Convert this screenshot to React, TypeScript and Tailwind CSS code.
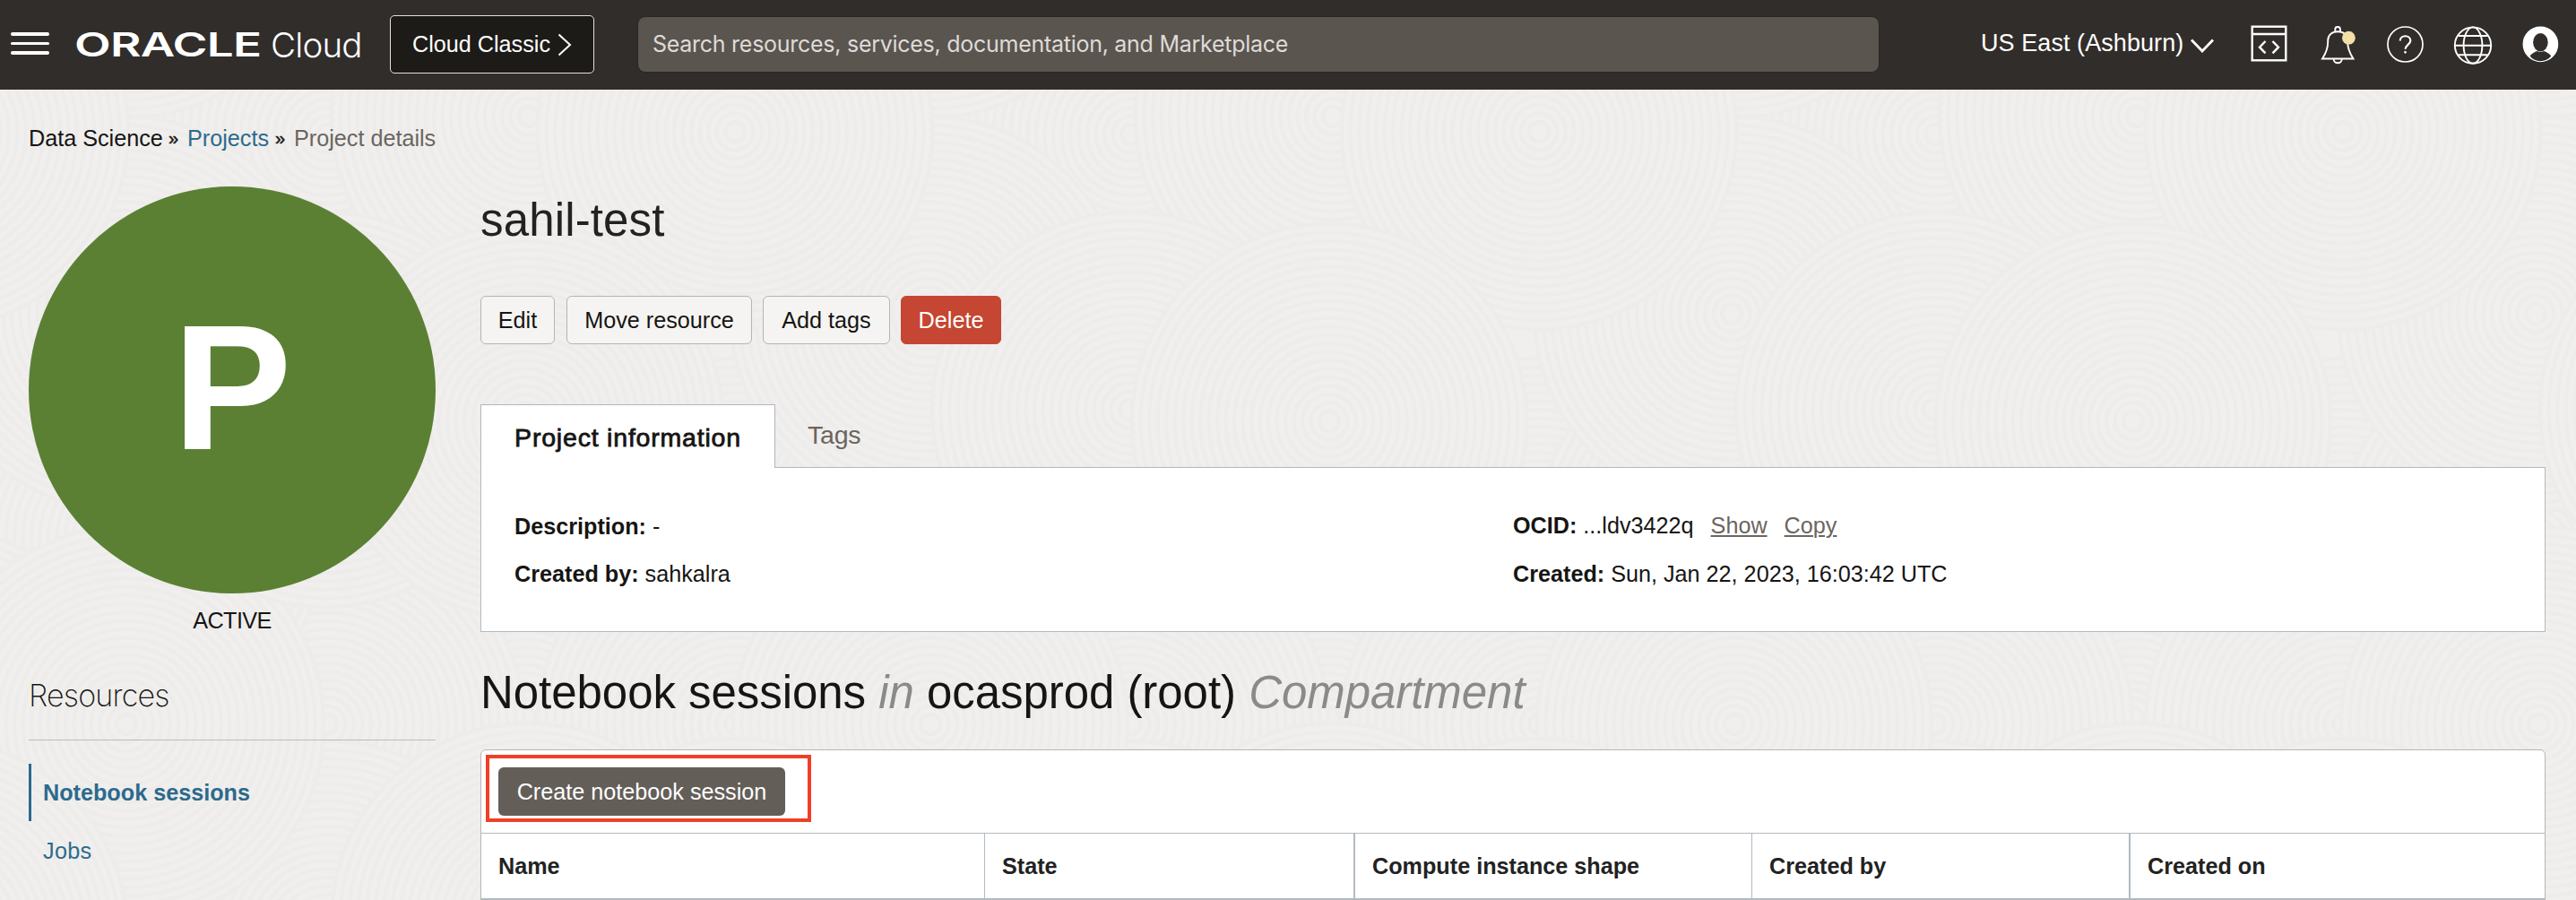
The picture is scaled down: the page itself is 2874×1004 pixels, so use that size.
import type { ReactNode } from "react";

const TILE = 897;
const RINGS = Array.from({ length: 23 }, (_, i) => 220 - i * 9.5);
const SWIRLS: [number, number][] = [
  [141, 100],
  [365, 640],
  [586, 800],
  [820, 620],
  [365, 808],
  [141, 600],
  [365, 150],
  [820, 808],
  [141, 808],
  [138, 350],
  [590, 130],
  [820, 147],
  [363, 457],
  [586, 470],
];

function Texture() {
  return (
    <svg className="absolute inset-0 h-full w-full" aria-hidden="true">
      <defs>
        <pattern id="swirls" width={TILE} height={TILE} patternUnits="userSpaceOnUse">
          <rect width={TILE} height={TILE} fill="#f0efed" />
          {SWIRLS.map(([cx, cy], i) =>
            [-TILE, 0, TILE].map((dx) =>
              [-TILE, 0, TILE].map((dy) => (
                <g key={`${i}${dx}${dy}`} fill="none" stroke="#edecea" strokeWidth="4">
                  {RINGS.map((r, n) => (
                    <circle key={r} cx={cx + dx} cy={cy + dy} r={r} fill={n === 0 ? "#f0efed" : "none"} />
                  ))}
                </g>
              )),
            ),
          )}
        </pattern>
      </defs>
      <rect width="100%" height="100%" fill="url(#swirls)" />
    </svg>
  );
}

function Header() {
  return (
    <header className="relative flex h-[100px] items-start bg-[#312d2a] text-white">
      <button className="mt-9 ml-3 flex w-[43px] flex-col gap-[7px]" aria-label="Menu">
        <span className="h-[3.5px] w-full rounded-full bg-white" />
        <span className="h-[3.5px] w-full rounded-full bg-white" />
        <span className="h-[3.5px] w-full rounded-full bg-white" />
      </button>
      <div className="mt-[25px] ml-[28px] flex h-[50px] items-center whitespace-nowrap">
        <span className="w-[219px]">
          <span className="inline-block origin-left scale-x-[1.45] font-['Inter'] text-[36.5px] leading-[50px] font-semibold tracking-[-0.5px]">
            ORACLE
          </span>
        </span>
        <span className="font-['Inter'] text-[38.5px] leading-[50px] font-light tracking-[-0.8px]">Cloud</span>
      </div>
      <button className="absolute top-[17px] left-[435px] flex h-[65px] w-[228px] items-center rounded-[5px] border border-[#e4e1dd] bg-[#1d1b17] pt-px pl-[24px] text-[25.2px]">
        Cloud Classic
        <svg className="ml-[8px]" width="16" height="26" viewBox="0 0 16 26" fill="none" stroke="white" strokeWidth="2">
          <path d="M1.5 1.5 14 13 1.5 24.5" />
        </svg>
      </button>
      <div className="absolute top-[19px] left-[712px] flex h-[61px] w-[1384px] items-center rounded-lg bg-[#5b5550] pt-px pl-4 font-['Inter'] text-[25px] tracking-[-0.27px] text-[#dedbd7] shadow-[0_0_0_1px_#2a2623]">
        Search resources, services, documentation, and Marketplace
      </div>
      <div className="absolute top-[30px] left-[2210px] flex h-9 items-center text-[27px] tracking-[0.07px] whitespace-nowrap">
        US East (Ashburn)
        <svg className="mt-[6px] ml-[8px]" width="26" height="16" viewBox="0 0 26 16" fill="none" stroke="white" strokeWidth="2.8">
          <path d="M1 1.5 13 14 25 1.5" />
        </svg>
      </div>
      <svg className="absolute top-0 left-[2490px]" width="384" height="100" viewBox="2490 0 384 100" fill="none" stroke="white">
        <g strokeWidth="2.4">
          <rect x="2512.7" y="29.7" width="37.6" height="37.6" />
          <path d="M2512 38h39M2527.5 46l-6.5 6.7 6.5 6.7M2535.5 46l6.5 6.7-6.5 6.7" />
        </g>
        <g strokeWidth="1.9">
          <path d="M2591 65.5h34.5c-4.5-7-6.3-12-6.3-18.5v-2c0-6-4.8-9.8-11-9.8s-11 3.800-11 9.800v2c0 6.500-1.700 11.500-6.200 18.500Z" />
          <path d="M2605.300 35.500v-3c0-3.300 5.600-3.300 5.600 0v3M2603.700 66c0 5.700 9 5.700 9 0" />
        </g>
        <circle cx="2620.400" cy="42.200" r="7.400" fill="#f3dfa7" stroke="none" />
        <g strokeWidth="1.7">
          <circle cx="2683.500" cy="49.500" r="19.500" />
          <path d="M2677.800 45.500c0-7 11.500-7 11.500 0 0 4-5.700 4.800-5.700 9.300" strokeWidth="2.2" />
          <circle cx="2683.500" cy="58.300" r="1" fill="white" stroke="white" strokeWidth="1" />
        </g>
        <g strokeWidth="1.900">
          <circle cx="2759" cy="50.600" r="20.200" />
          <ellipse cx="2759" cy="50.600" rx="10.400" ry="20.200" />
          <path d="M2738.800 50.800h40.400M2742.500 40h33M2742.500 61.300h33" />
        </g>
        <circle cx="2834.400" cy="49.300" r="19.200" fill="white" strokeWidth="1.300" />
        <ellipse cx="2834.400" cy="47.200" rx="8.300" ry="10.200" fill="#312d2a" stroke="none" />
        <path d="M2822.500 62.500c2.500-3 4.500-4 8-5.500 2.500 1.200 5.300 1.200 7.800 0 3.500 1.500 5.500 2.500 8 5.500-6 7.500-18 7.500-23.800 0Z" fill="#312d2a" stroke="none" />
      </svg>
    </header>
  );
}

function Action({ children, className }: { children: ReactNode; className: string }) {
  return (
    <button className={`h-[54px] rounded-md border pt-px text-center whitespace-nowrap ${className}`}>
      {children}
    </button>
  );
}

const LIGHT = "border-[#b8b4af] bg-[#f5f4f2]";

function Field({ label, children }: { label: string; children: ReactNode }) {
  return (
    <p className="leading-[30px]">
      <b>{label}</b> {children}
    </p>
  );
}

const COLUMNS = [
  { name: "Name", size: "w-[562px] border-r" },
  { name: "State", size: "w-[413px] border-r-2" },
  { name: "Compute instance shape", size: "w-[443px] border-r" },
  { name: "Created by", size: "w-[422px] border-r-2" },
  { name: "Created on", size: "flex-1" },
];

export default function App() {
  return (
    <div className="relative h-[1004px] w-[2874px] overflow-hidden font-['Liberation_Sans',Arial,sans-serif] text-[25.2px] text-[#161513]">
      <Texture />
      <Header />
      <nav className="relative mt-[39px] ml-[32px] flex leading-[30px] whitespace-nowrap">
        <span className="w-[156px]">Data Science</span>
        <span className="w-[21px] text-[20px] leading-[30px] [-webkit-text-stroke:0.5px]">»</span>
        <a className="w-[98px] text-[#2c6a8d]">Projects</a>
        <span className="w-[21px] text-[20px] leading-[30px] [-webkit-text-stroke:0.5px]">»</span>
        <span className="text-[#6b6560]">Project details</span>
      </nav>

      <div className="relative mt-[39px] ml-8 flex gap-[50px]">
        <aside className="w-[454px]">
          <div className="flex size-[454px] items-center justify-center rounded-full bg-[#5b8034] pb-[5px] text-[199px] leading-none font-bold text-white">
            P
          </div>
          <p className="mt-[15px] text-center leading-[30px] tracking-[-0.6px]">ACTIVE</p>
          <h2 className="mt-[49px] border-b border-[#b5bac4] pb-[29px] font-['Inter'] text-[34px] leading-10 font-extralight tracking-[-0.8px]">
            Resources
          </h2>
          <a className="mt-[26px] flex h-16 items-center border-l-[3px] border-[#2c6a8d] pt-[2px] pl-[13px] font-bold text-[#2c6a8d]">
            Notebook sessions
          </a>
          <a className="mt-px flex h-16 items-center pt-[2px] pl-4 tracking-[0.3px] text-[#2c6a8d]">Jobs</a>
        </aside>

        <main className="w-[2304px]">
          <h1 className="mt-[8px] text-[51px] leading-[60px] tracking-[0.15px] text-[#222]">sahil-test</h1>
          <div className="mt-[54px] flex">
            <Action className={`w-[83px] ${LIGHT}`}>Edit</Action>
            <Action className={`ml-[13px] w-[207px] ${LIGHT}`}>Move resource</Action>
            <Action className={`ml-3 w-[142px] ${LIGHT}`}>Add tags</Action>
            <Action className="ml-3 w-[112px] border-[#c54632] bg-[#c54632] text-white">Delete</Action>
          </div>

          <div className="relative z-10 mt-[67px] -mb-px flex h-[71px] text-[28.5px]">
            <div className="flex w-[329px] items-center justify-center border border-b-0 border-[#b3b6bc] bg-white pt-[3px] tracking-[0.8px] [-webkit-text-stroke:0.8px]">
              Project information
            </div>
            <div className="flex items-center pb-[3px] pl-[36px] tracking-[-0.2px] text-[#6b6560]">Tags</div>
          </div>
          <section className="flex h-[184px] border border-[#b3b9c2] bg-white pt-[50px] pl-[37px]">
            <div className="flex w-[1114px] flex-col gap-[23px]">
              <Field label="Description:">-</Field>
              <Field label="Created by:">sahkalra</Field>
            </div>
            <div className="-mt-px flex flex-col gap-6">
              <Field label="OCID:">
                ...ldv3422q
                <a className="ml-[19px] text-[#6b6560] underline decoration-2 underline-offset-2">Show</a>
                <a className="ml-[19px] text-[#6b6560] underline decoration-2 underline-offset-2">Copy</a>
              </Field>
              <Field label="Created:">Sun, Jan 22, 2023, 16:03:42 UTC</Field>
            </div>
          </section>

          <h2 className="mt-[38px] text-[51px] leading-[60px] tracking-[-0.05px] whitespace-nowrap">
            Notebook sessions <i className="text-[#8a8a8a]">in</i> ocasprod (root){" "}
            <i className="text-[#8a8a8a]">Compartment</i>
          </h2>
          <section className="relative mt-[33px] h-[180px] rounded-t-md border border-[#bab6b1] bg-white">
            <div className="flex h-[93px] border-b border-[#b3b9c2] pt-[19px] pl-[19px]">
              <button className="h-[54px] w-[320px] rounded-md bg-[#645e59] pt-px text-white">Create notebook session</button>
            </div>
            <div className="absolute top-[5px] left-[5px] h-[75px] w-[363px] border-4 border-[#f03f27]" />
            <div className="flex h-[75px] border-b-[3px] border-[#b3b9bf] font-bold text-[#222]">
              {COLUMNS.map((c) => (
                <div key={c.name} className={`flex items-center border-[#b3b9c2] pt-px pl-[19px] ${c.size}`}>
                  {c.name}
                </div>
              ))}
            </div>
          </section>
        </main>
      </div>
    </div>
  );
}
